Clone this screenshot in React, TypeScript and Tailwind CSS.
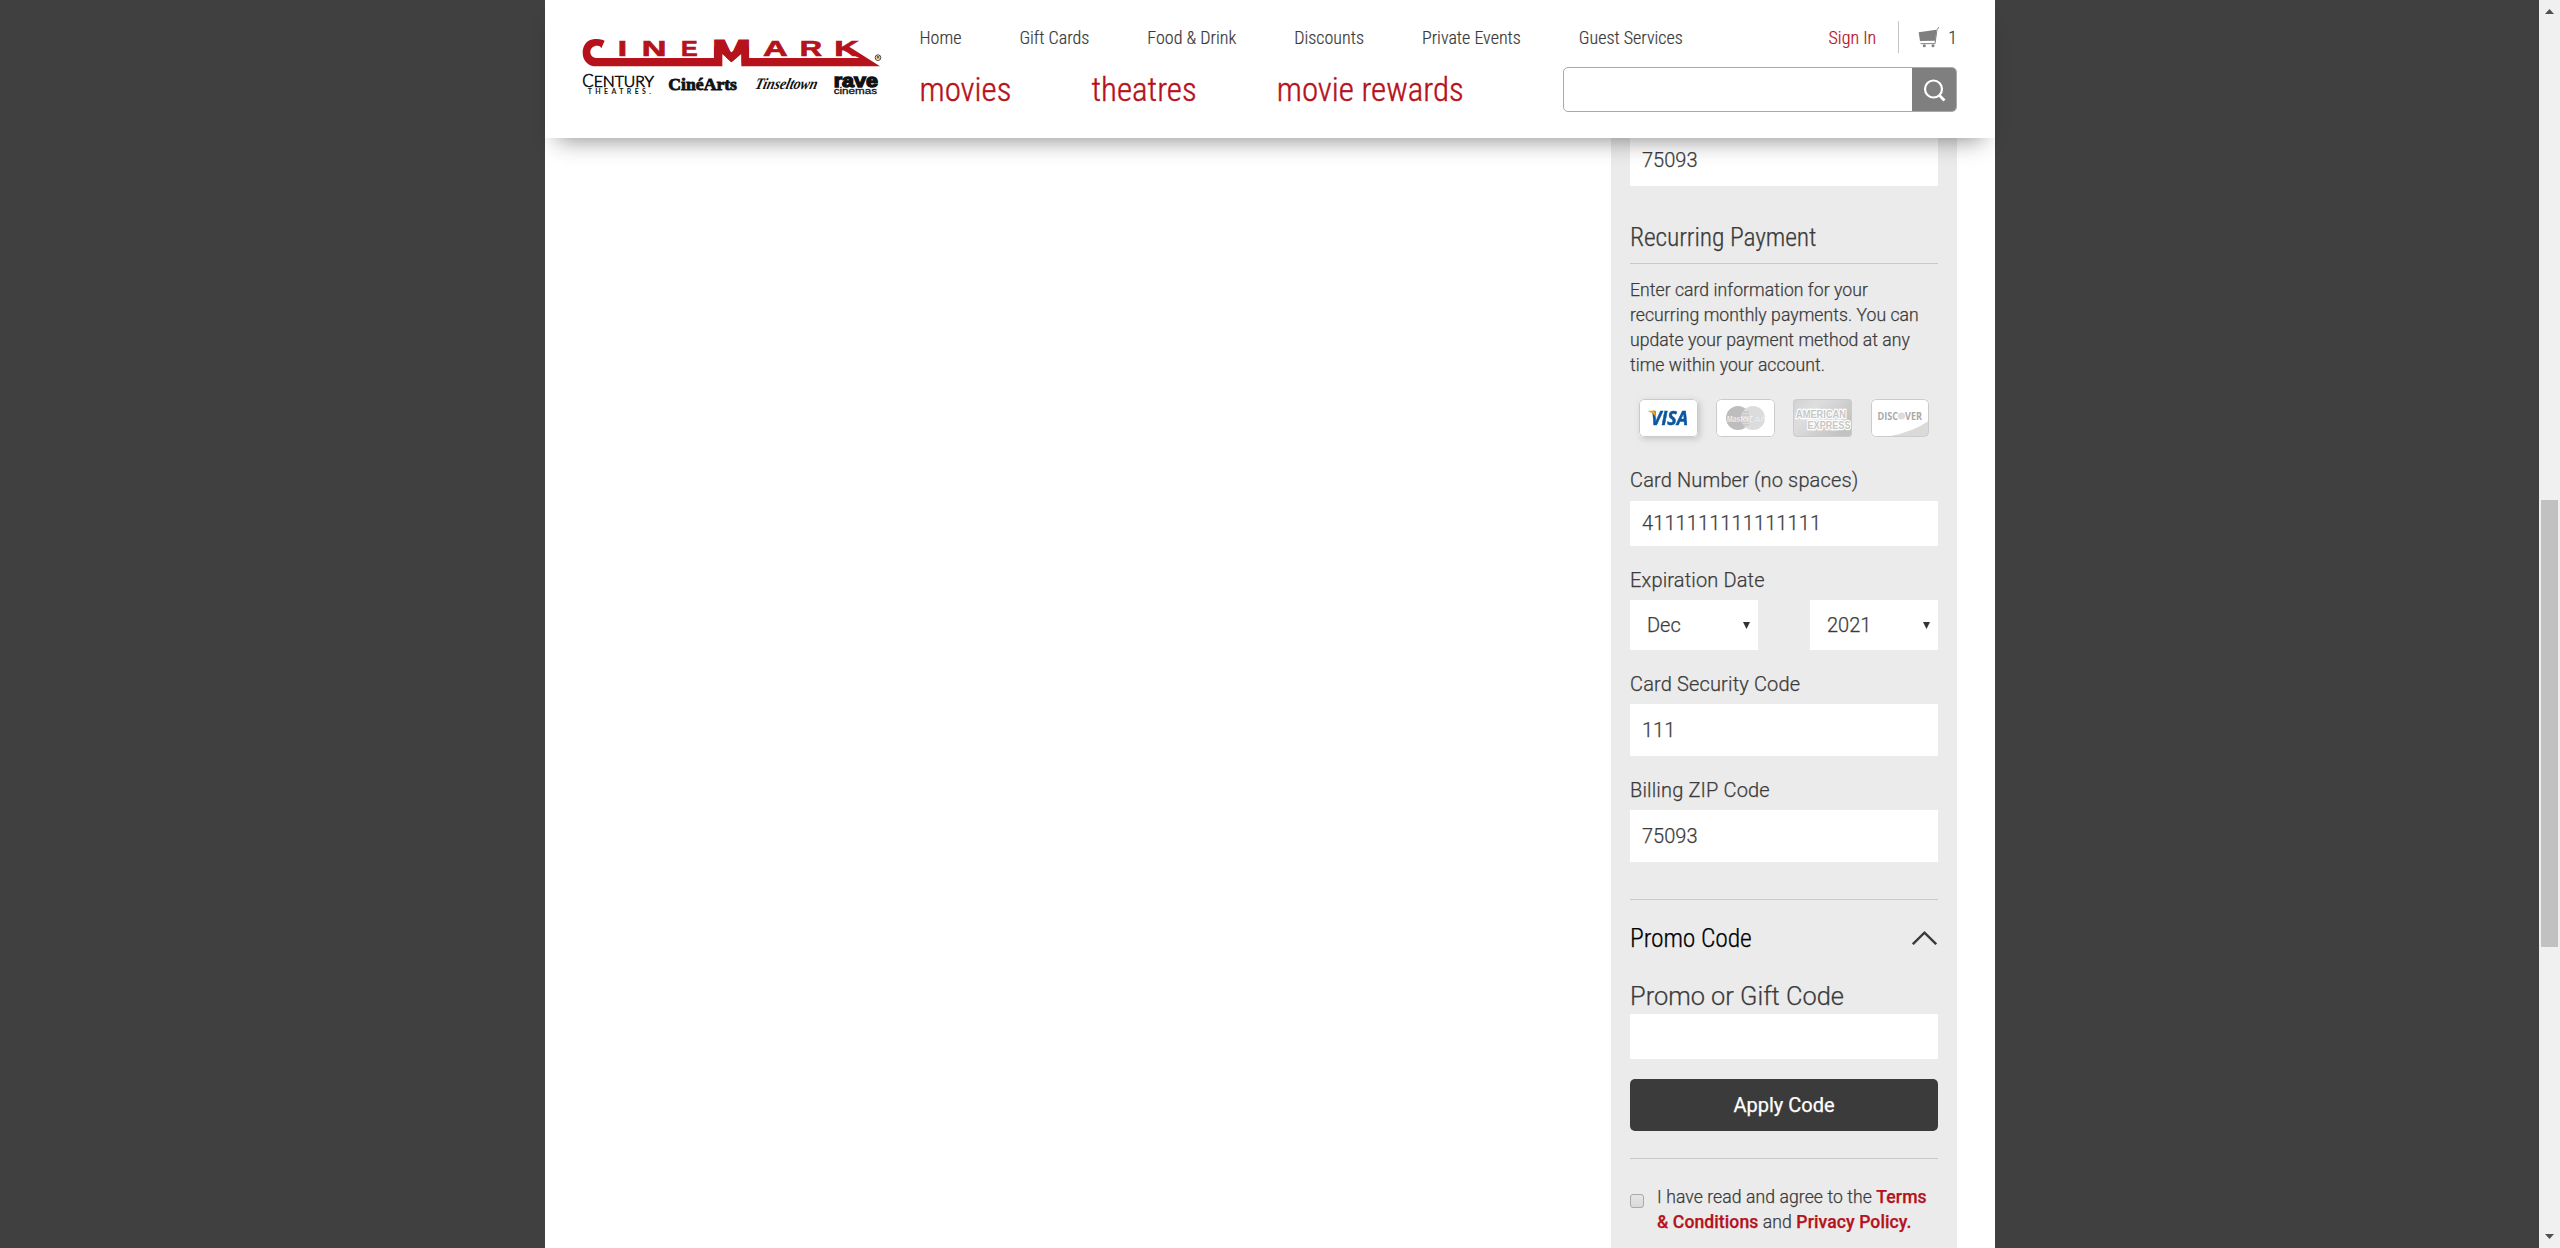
import type { ReactNode } from "react";

const topLinks = ["Home", "Gift Cards", "Food & Drink", "Discounts", "Private Events", "Guest Services"];
const mainLinks = ["movies", "theatres", "movie rewards"];

function Logo() {
  const sans = "'Liberation Sans', sans-serif";
  const serif = "'Liberation Serif', serif";
  const red = "#b5121b";
  const letters: [string, number, number][] = [
    ["I", 233, 28],
    ["N", 305, 74],
    ["E", 423, 50],
    ["A", 669, 74],
    ["R", 779, 67],
    ["K", 883, 74],
  ];
  return (
    <svg className="h-[58px] w-[304px] overflow-visible" viewBox="123 114 912 174" aria-label="Cinemark">
      <g fill={red} stroke={red} fontFamily={sans} fontWeight="700">
        <g fontSize="64" strokeWidth="2">
          {letters.map(([c, x, w]) => (
            <text key={c} x={x} y="167" textLength={w} lengthAdjust="spacingAndGlyphs">
              {c}
            </text>
          ))}
        </g>
        <text x="515" y="186" fontSize="92" strokeWidth="3" textLength="119" lengthAdjust="spacingAndGlyphs">
          M
        </text>
      </g>
      <path fill="#fff" d="M547 202V162L574 187L604 162V202Z" />
      {/* ribbon */}
      <path
        fill={red}
        d="M194 122C184 118 173 117 164 117C141 118 128 136 128 158C128 182 145 199 168 199H547V162L574 187L604 162V199H1020L924 138L900 146L958 174H627V140H600L574 157L548 140H522V174H172C158 174 151 166 151 156C151 145 160 137 172 137C178 137 182 139 184 145Z"
      />
      <circle cx="1014" cy="173" r="8.5" fill="none" stroke="#222" strokeWidth="2.5" />
      <text x="1009.5" y="178" fontSize="13" fontWeight="700" fontFamily={sans} fill="#222">R</text>
      <g fill="#111">
        <text x="127" y="260" fontSize="52" stroke="#111" strokeWidth="2" fontFamily="Lato, sans-serif" textLength="34" lengthAdjust="spacingAndGlyphs">C</text>
        <text x="161" y="260" fontSize="46" stroke="#111" strokeWidth="2" fontFamily="Lato, sans-serif" textLength="181" lengthAdjust="spacingAndGlyphs">ENTURY</text>
        <text x="143" y="282" fontSize="21" fontWeight="700" fontFamily="Lato, sans-serif" textLength="190">THEATRES.</text>
        <text x="385" y="270" fontSize="53" fontWeight="700" stroke="#111" strokeWidth="2.5" fontFamily={serif} textLength="206" lengthAdjust="spacingAndGlyphs">CinéArts</text>
        <g transform="translate(643 267) skewX(-14)">
          <text x="0" y="0" fontSize="48" fontStyle="italic" fontWeight="700" fontFamily={serif} textLength="186" lengthAdjust="spacingAndGlyphs">Tinseltown</text>
        </g>
        <text x="881" y="260" fontSize="57" fontWeight="700" stroke="#111" strokeWidth="4" fontFamily={sans} textLength="133" lengthAdjust="spacingAndGlyphs">rave</text>
        <text x="881" y="281" fontSize="25" stroke="#111" strokeWidth="0.8" fontFamily={sans} textLength="130" lengthAdjust="spacingAndGlyphs">cinemas</text>
      </g>
    </svg>
  );
}

function CartIcon() {
  return (
    <svg className="h-[22px] w-[22px] shrink-0" viewBox="52 54 66 66">
      <path fill="#7f7f7f" d="M54 73L107 65L104 98L58 99Z" />
      <path fill="none" stroke="#7f7f7f" strokeWidth="3" d="M60 107H103L109 65L115 57" />
      <circle cx="71" cy="113" r="4.5" fill="#7f7f7f" />
      <circle cx="97" cy="113" r="4.5" fill="#7f7f7f" />
    </svg>
  );
}

function CardFrame({ width, active, children }: { width: number; active?: boolean; children: ReactNode }) {
  return (
    <svg
      className={active ? "h-[38px] overflow-visible drop-shadow-[2px_2px_3px_rgba(0,0,0,0.16)]" : "h-[38px] overflow-visible"}
      width={width}
      height={38}
      viewBox={`0 0 ${width} 38`}
    >
      {children}
      <rect x="0.5" y="0.5" width={width - 1} height="37" rx="4" fill="none" stroke="#cbcbcb" />
    </svg>
  );
}

function Cards() {
  const sans = "'Liberation Sans', sans-serif";
  return (
    <div className="mt-[21px] flex h-[38px] pl-[9px] [-webkit-text-stroke:0]">
      <CardFrame width={59} active>
        <rect width="59" height="38" rx="4" fill="#fff" />
        <text x="12" y="26" fontSize="19" fontWeight="700" fontStyle="italic" fontFamily="'Open Sans', sans-serif" fill="#0a579f" stroke="#0a579f" strokeWidth="0.5" textLength="37" lengthAdjust="spacingAndGlyphs">VISA</text>
        <path d="M9.5 11.8H15.5L17.5 19Q14.5 14 9.5 12.6Z" fill="#f6a21c" />
      </CardFrame>
      <div className="w-[18px]" />
      <CardFrame width={59}>
        <rect width="59" height="38" rx="4" fill="#fff" />
        <circle cx="22" cy="19" r="12" fill="#bdbdbd" />
        <circle cx="37" cy="19" r="12" fill="#dcdcdc" />
        <path d="M26 13H33M25.5 16H33M25.5 23H33M26 26H33" stroke="#c6c6c6" strokeWidth="1.5" />
        <text x="11" y="22.5" fontSize="9.5" fontWeight="700" fontFamily={sans} fill="#fff" stroke="#a8a8a8" strokeWidth="0.2" textLength="38" lengthAdjust="spacingAndGlyphs">MasterCard</text>
      </CardFrame>
      <div className="w-[18px]" />
      <CardFrame width={59}>
        <defs>
          <linearGradient id="amex" x1="0" y1="0" x2="1" y2="0.6">
            <stop offset="0" stopColor="#d2d2d2" />
            <stop offset="0.35" stopColor="#dedede" />
            <stop offset="1" stopColor="#c2c2c2" />
          </linearGradient>
        </defs>
        <rect width="59" height="38" rx="4" fill="url(#amex)" />
        <g fontSize="10.5" fontWeight="700" fontFamily={sans} fill="#c6c6c6" stroke="#fff" strokeWidth="2.4" style={{ paintOrder: "stroke" }}>
          <text x="3" y="18.5" textLength="50" lengthAdjust="spacingAndGlyphs">AMERICAN</text>
          <text x="14.5" y="29.8" textLength="43" lengthAdjust="spacingAndGlyphs">EXPRESS</text>
        </g>
      </CardFrame>
      <div className="w-[19px]" />
      <CardFrame width={58}>
        <rect width="58" height="38" rx="4" fill="#fff" />
        <path d="M17 37.5Q42 33 57.5 22V34Q57.5 37.5 54 37.5Z" fill="#dadada" />
        <circle cx="30.5" cy="17" r="3.6" fill="#dcdcdc" />
        <g fontSize="10.8" fontWeight="700" fontFamily="'Open Sans', sans-serif" fill="#a9a9a9">
          <text x="6.5" y="20.8" textLength="20.5" lengthAdjust="spacingAndGlyphs">DISC</text>
          <text x="34" y="20.8" textLength="17" lengthAdjust="spacingAndGlyphs">VER</text>
        </g>
      </CardFrame>
    </div>
  );
}

function Label({ children }: { children: ReactNode }) {
  return (
    <div className="mt-[22px] h-6 whitespace-nowrap text-[20px] leading-6 tracking-[0.15px]">{children}</div>
  );
}

function Field({ value, tall }: { value: string; tall?: boolean }) {
  return (
    <div
      className={
        tall
          ? "mt-2 flex h-[52px] items-center bg-white px-3 text-[20px] leading-6"
          : "mt-[9px] flex h-[45px] items-center bg-white px-3 pb-px text-[20px] leading-6 tracking-[0.1px]"
      }
    >
      {value}
    </div>
  );
}

function SelectBox({ value }: { value: string }) {
  return (
    <div className="flex h-[50px] w-32 items-center justify-between bg-white pl-[17px] pr-2 text-[20px] leading-6">
      <span>{value}</span>
      <svg className="h-[7px] w-[7px]" viewBox="0 0 7 7">
        <path d="M0 0H7L3.5 7Z" fill="#333" />
      </svg>
    </div>
  );
}

function Header() {
  return (
    <header className="relative z-10 flex h-[138px] shrink-0 bg-white pl-9 pr-[38px] shadow-[0_14px_22px_-12px_rgba(0,0,0,0.45)]">
      <div className="w-[338px] shrink-0 pt-[38px] [-webkit-text-stroke:0]">
        <Logo />
      </div>
      <div className="flex flex-1 flex-col font-['Roboto_Condensed']">
        <div className="mt-[21px] flex h-8 items-center text-[18px] font-light [-webkit-text-stroke:0.2px]">
          <nav className="ml-[0.5px] flex gap-[58px] whitespace-nowrap">
            {topLinks.map((t) => (
              <span key={t}>{t}</span>
            ))}
          </nav>
          <span className="ml-auto text-[#b5121b]">Sign In</span>
          <span className="ml-[22px] h-8 w-px bg-[#c4c4c4]" />
          <span className="ml-[19px]">
            <CartIcon />
          </span>
          <span className="ml-[8px]">1</span>
        </div>
        <div className="mt-[14px] flex h-[45px] justify-between">
          <nav className="flex gap-[80px] whitespace-nowrap pl-[0.5px] text-[33px] font-light leading-[46px] text-[#b5121b] [-webkit-text-stroke:0.4px]">
            {mainLinks.map((t) => (
              <span key={t}>{t}</span>
            ))}
          </nav>
          <div className="flex h-[45px] w-[394px] overflow-hidden rounded-[5px] border border-[#a9a9a9] bg-white">
            <div className="flex-1" />
            <div className="-my-px -mr-px flex w-[45px] items-center justify-center bg-[#7f7f7f]">
              <svg className="h-6 w-6" viewBox="0 0 24 24" fill="none" stroke="#fff" strokeWidth="2.2">
                <circle cx="10.5" cy="11" r="8.5" />
                <path d="M16.3 17.2L21.5 22.4" strokeWidth="2.8" />
              </svg>
            </div>
          </div>
        </div>
      </div>
    </header>
  );
}

export default function App() {
  return (
    <div className="flex h-[1248px] w-[2560px] overflow-hidden bg-[#404040] font-[Roboto] font-light text-[#3b3b3b] [-webkit-text-stroke:0.25px]">
      <div className="flex flex-1 pl-[545px]">
        <div className="flex w-[1450px] flex-col bg-white">
          <Header />
          <aside className="ml-[1066px] w-[346px] flex-1 bg-[#ebebeb] px-[19px]">
            <div className="-mt-1 flex h-[52px] items-center bg-white px-3 text-[20px]">75093</div>
            <h2 className="mt-9 h-[42px] border-b border-[#c9c9c9] font-['Roboto_Condensed'] text-[25.6px] font-light leading-[31px] tracking-[-0.13px]">
              Recurring Payment
            </h2>
            <p className="mt-[14px] whitespace-nowrap text-[17.6px] leading-[25px] tracking-[0.05px]">
              Enter card information for your
              <br />
              recurring monthly payments. You can
              <br />
              update your payment method at any
              <br />
              time within your account.
            </p>
            <Cards />
            <div className="h-[9px]" />
            <Label>Card Number (no spaces)</Label>
            <Field value="4111111111111111" />
            <Label>Expiration Date</Label>
            <div className="mt-2 flex justify-between">
              <SelectBox value="Dec" />
              <SelectBox value="2021" />
            </div>
            <Label>Card Security Code</Label>
            <Field value="111" tall />
            <Label>Billing ZIP Code</Label>
            <Field value="75093" tall />
            <div className="mt-[37px] h-px bg-[#c9c9c9]" />
            <div className="mt-[23px] flex h-[30px] items-center justify-between font-['Roboto_Condensed'] text-[25.6px] font-light leading-[30px] tracking-[-0.13px] text-black">
              Promo Code
              <svg className="mr-px h-[14px] w-[25px]" viewBox="0 0 25 14" fill="none" stroke="#3b3b3b" strokeWidth="2.4">
                <path d="M0.8 13.2L12.5 1.7L24.2 13.2" />
              </svg>
            </div>
            <div className="mt-7 h-[30px] whitespace-nowrap text-[25.4px] leading-[30px]">Promo or Gift Code</div>
            <div className="mt-[3px] h-[45px] bg-white" />
            <div className="mt-5 flex h-[52px] items-center justify-center rounded-[5px] bg-[#3b3b3b] text-[20px] font-normal text-white">
              Apply Code
            </div>
            <div className="mt-[27px] h-px bg-[#c9c9c9]" />
            <div className="mt-[26px] flex">
              <span className="mt-[9px] h-[14px] w-[14px] shrink-0 rounded-[3px] border border-[#a9a9a9] bg-linear-to-b from-[#e6e6e6] to-[#d9d9d9]" />
              <p className="ml-[13px] whitespace-nowrap text-[17.6px] leading-[25px] tracking-[0.08px]">
                I have read and agree to the{" "}
                <span className="font-medium text-[#b5121b]">Terms</span>
                <br />
                <span className="font-medium text-[#b5121b]">&amp; Conditions</span> and{" "}
                <span className="font-medium text-[#b5121b]">Privacy Policy.</span>
              </p>
            </div>
          </aside>
        </div>
      </div>
      <div className="flex w-[21px] shrink-0 flex-col items-center bg-[#f0f0f0]">
        <svg className="mt-[9px] h-[5px] w-[9px]" viewBox="0 0 9 5">
          <path d="M0 5H9L4.5 0Z" fill="#505050" />
        </svg>
        <div className="mt-[486px] h-[447px] w-[17px] bg-[#c1c1c1]" />
        <svg className="mt-auto mb-[9px] h-[5px] w-[9px]" viewBox="0 0 9 5">
          <path d="M0 0H9L4.5 5Z" fill="#505050" />
        </svg>
      </div>
    </div>
  );
}
